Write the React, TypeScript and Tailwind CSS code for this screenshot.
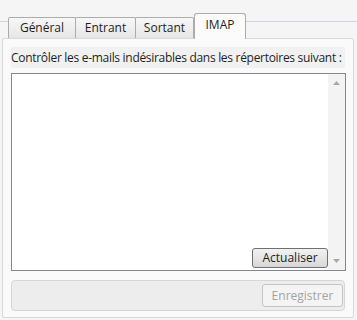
import React from "react";

const font = { fontFamily: '"Open Sans", "Noto Sans", sans-serif' };

function Tab({ label, w, active }: { label: string; w: string; active?: boolean }) {
  if (active) {
    return (
      <div
        className={`${w} h-[26px] -mb-px relative z-10 flex items-center justify-center rounded-t-[3px] border border-b-0 border-[#acacac] bg-[#fbfbfb] text-[12px] text-[#1e1e1e]`}
      >
        <span className="-mt-[4px]">{label}</span>
      </div>
    );
  }
  return (
    <div
      className={`${w} h-[21px] flex items-center justify-center border border-b-0 border-[#acacac] -ml-px first:ml-0 bg-gradient-to-b from-[#f7f7f7] to-[#e6e6e6] text-[12px] text-[#1e1e1e] rounded-t-[2px]`}
    >
      {label}
    </div>
  );
}

export default function App() {
  return (
    <div className="w-[357px] h-[320px] bg-[#f5f5f5] flex flex-col overflow-hidden" style={font}>
      <div className="h-[38px] flex items-end">
        <div className="w-[9px] self-start mt-[21px] border-b border-[#c5d5ea]" />
        <Tab label="Général" w="w-[68px]" />
        <Tab label="Entrant" w="w-[61px]" />
        <Tab label="Sortant" w="w-[59px]" />
        <Tab label="IMAP" w="w-[52px]" active />
        <div className="flex-1 self-start mt-[21px] border-b border-[#c5d5ea]" />
      </div>
      <div className="mx-[2px] w-[352px] h-[280px] border border-[#d9d9d9] rounded-[2px] bg-[#fafafa] flex flex-col px-[8px]">
        <div className="mt-[8px] h-[21px] bg-[#f1f1f1] flex items-center text-[12px] text-[#1e1e1e] whitespace-nowrap tracking-[-0.3px]">
          Contrôler les e-mails indésirables dans les répertoires suivant :
        </div>
        <div className="mt-[5px] h-[198px] w-[335px] border border-[#828790] bg-white flex">
          <div className="flex-1 flex flex-col justify-end items-end pb-[2px]">
            <button className="w-[76px] h-[20px] rounded-[3px] border border-[#707070] bg-gradient-to-b from-[#f2f2f2] to-[#d8d8d8] text-[12px] text-[#1e1e1e] leading-none flex items-center justify-center">
              Actualiser
            </button>
          </div>
          <div className="w-[17px] bg-[#f3f3f3] flex flex-col items-center justify-between py-[7px]">
            <svg width="7" height="4" viewBox="0 0 7 4"><path d="M0 4 L3.5 0 L7 4 Z" fill="#a8a8a8" /></svg>
            <svg width="7" height="4" viewBox="0 0 7 4"><path d="M0 0 L3.5 4 L7 0 Z" fill="#a8a8a8" /></svg>
          </div>
        </div>
        <div className="mt-[9px] h-[31px] w-[334px] rounded-[4px] border border-[#d6d6d6] bg-[#ededed] flex items-center justify-end pr-[1px]">
          <button className="w-[81px] h-[23px] rounded-[3px] border border-[#c4c4c4] bg-[#f4f4f4] text-[12px] text-[#a3a3a3] flex items-center justify-center">
            Enregistrer
          </button>
        </div>
      </div>
    </div>
  );
}
